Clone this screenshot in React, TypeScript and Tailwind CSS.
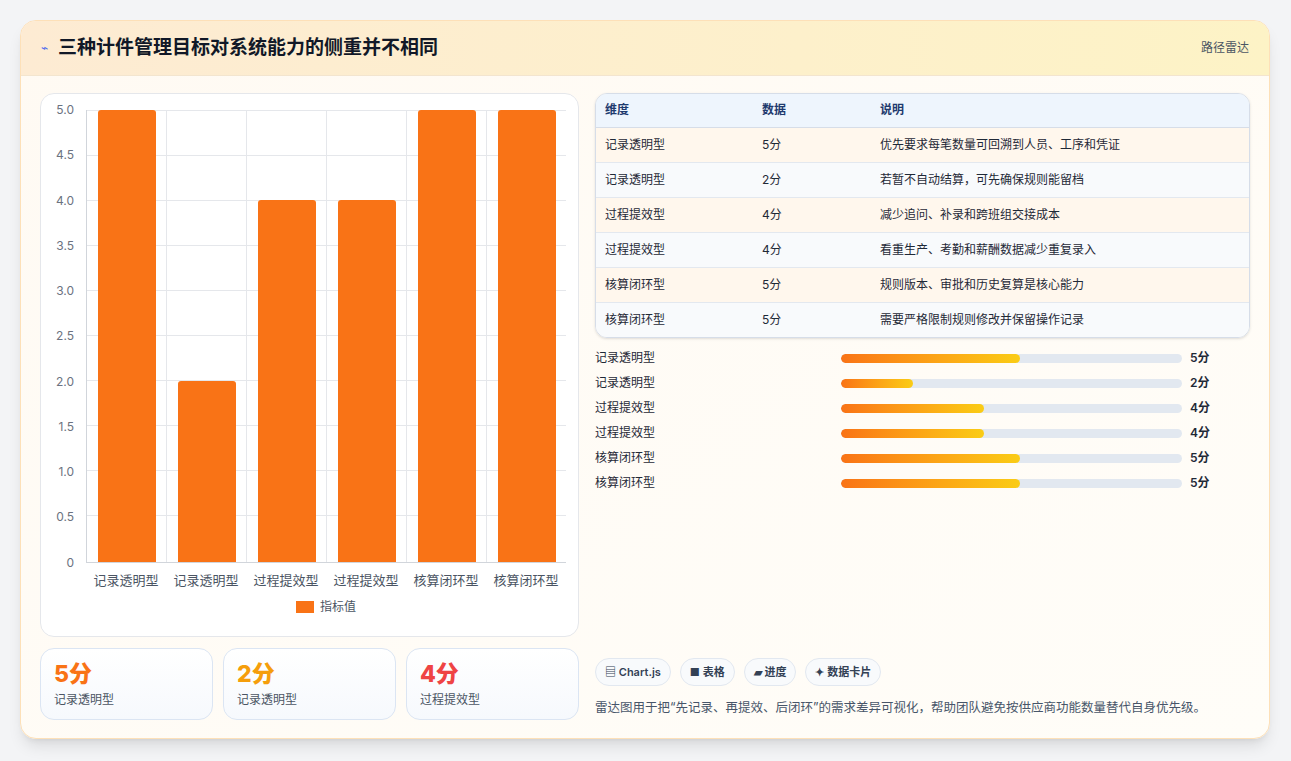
const rows = [
  { name: '记录透明型', v: 5, note: '优先要求每笔数量可回溯到人员、工序和凭证' },
  { name: '记录透明型', v: 2, note: '若暂不自动结算，可先确保规则能留档' },
  { name: '过程提效型', v: 4, note: '减少追问、补录和跨班组交接成本' },
  { name: '过程提效型', v: 4, note: '看重生产、考勤和薪酬数据减少重复录入' },
  { name: '核算闭环型', v: 5, note: '规则版本、审批和历史复算是核心能力' },
  { name: '核算闭环型', v: 5, note: '需要严格限制规则修改并保留操作记录' },
]

const ticks = ['5.0', '4.5', '4.0', '3.5', '3.0', '2.5', '2.0', '1.5', '1.0', '0.5', '0']

function Chart() {
  return (
    <div className="flex flex-col h-full pt-[16px] pb-[20px] pl-[8px] pr-[12px]">
      <div className="flex flex-1">
        <div className="w-[37px] flex flex-col justify-between text-[12px] text-[#6b7280] text-right pr-[12px] -mt-[7px] -mb-[7px]">
          {ticks.map((t) => (
            <span key={t} className="leading-[14px]">{t}</span>
          ))}
        </div>
        <div className="relative flex-1 border-l border-b border-[#d1d5db]">
          <div className="absolute inset-0 flex flex-col justify-between">
            {ticks.map((t, i) => (
              <div key={t} className={`h-px ${i === ticks.length - 1 ? 'bg-transparent' : 'bg-[#e5e7eb]'}`} />
            ))}
          </div>
          <div className="absolute inset-0 flex">
            {rows.map((r, i) => (
              <div key={i} className={`flex-1 flex items-end justify-center ${i < 5 ? 'border-r border-[#e5e7eb]' : ''}`}>
                <div className="w-[58px] bg-[#f97316] rounded-t-[3px]" style={{ height: `${(r.v / 5) * 100}%` }} />
              </div>
            ))}
          </div>
        </div>
      </div>
      <div className="flex ml-[37px] mt-[8px]">
        {rows.map((r, i) => (
          <div key={i} className="flex-1 text-center text-[13px] text-[#4b5563]">{r.name}</div>
        ))}
      </div>
      <div className="flex items-center justify-center gap-[6px] mt-[8px] ml-[37px] text-[12px] text-[#4b5563]">
        <span className="w-[18px] h-[12px] bg-[#f97316]" />
        指标值
      </div>
    </div>
  )
}

export default function App() {
  return (
    <div className="w-[1291px] h-[761px] bg-[#f3f4f6] pt-[20px] px-[20px]" style={{ fontFamily: 'Inter, "Noto Sans CJK SC", sans-serif' }}>
      <div className="w-[1250px] h-[719px] rounded-[16px] border border-[#fde0b8] bg-gradient-to-br from-[#fffaf3] to-[#fffdf8] shadow-lg flex flex-col overflow-hidden">
        <div className="h-[55px] flex items-center justify-between px-[20px] bg-gradient-to-r from-[#fdebd3] to-[#fdf3c6] border-b border-[#f3e5cf]">
          <div className="flex items-center gap-[10px]">
            <span className="text-[#4f6bed] text-[12px]">⌁</span>
            <h1 className="text-[19px] font-bold text-[#111827]">三种计件管理目标对系统能力的侧重并不相同</h1>
          </div>
          <span className="text-[12px] text-[#4b5563]">路径雷达</span>
        </div>
        <div className="flex flex-1 gap-[16px] px-[19px] pt-[17px] pb-[18px]">
          <div className="w-[539px] flex flex-col gap-[11px]">
            <div className="h-[544px] bg-white rounded-[14px] border border-[#e5e7eb]">
              <Chart />
            </div>
            <div className="flex gap-[10px] flex-1">
              {[
                { v: '5分', c: 'text-[#f97316]' },
                { v: '2分', c: 'text-[#f59e0b]' },
                { v: '4分', c: 'text-[#ef4444]' },
              ].map((s, i) => (
                <div key={i} className="flex-1 rounded-[14px] border border-[#dbe5f3] bg-gradient-to-b from-white to-[#f6f9fd] px-[13px] pt-[10px]">
                  <div className={`text-[23px] font-extrabold leading-[30px] ${s.c}`}>{s.v}</div>
                  <div className="text-[12px] text-[#4b5563] mt-[2px]">{rows[i].name}</div>
                </div>
              ))}
            </div>
          </div>
          <div className="flex-1 flex flex-col">
            <div className="rounded-[12px] border border-[#d6dde8] overflow-hidden shadow-sm">
              <table className="w-full text-[12px]">
                <thead>
                  <tr className="bg-[#eef5fd] text-[#1e3a6e] h-[33px] border-b border-[#d6dde8]">
                    <th className="text-left font-semibold pl-[9px] w-[166px]">维度</th>
                    <th className="text-left font-semibold w-[118px]">数据</th>
                    <th className="text-left font-semibold">说明</th>
                  </tr>
                </thead>
                <tbody>
                  {rows.map((r, i) => (
                    <tr key={i} className={`h-[35px] text-[#1f2937] ${i < 5 ? 'border-b border-[#e3e8ef]' : ''} ${i % 2 === 0 ? 'bg-[#fff7ed]' : 'bg-[#f8fafc]'}`}>
                      <td className="pl-[9px]">{r.name}</td>
                      <td>{r.v}分</td>
                      <td>{r.note}</td>
                    </tr>
                  ))}
                </tbody>
              </table>
            </div>
            <div className="flex flex-col gap-[9px] mt-[12px]">
              {rows.map((r, i) => (
                <div key={i} className="flex items-center h-[16px] text-[12px] text-[#1f2937]">
                  <span className="w-[246px]">{r.name}</span>
                  <div className="w-[341px] h-[9px] rounded-full bg-[#e2e8f0] overflow-hidden">
                    <div className="h-full rounded-full bg-gradient-to-r from-[#f97316] to-[#facc15]" style={{ width: `${r.v * 10.5}%` }} />
                  </div>
                  <span className="ml-[8px] font-semibold">{r.v}分</span>
                </div>
              ))}
            </div>
            <div className="mt-auto">
              <div className="flex gap-[9px]">
                {['▤ Chart.js', '■ 表格', '▰ 进度', '✦ 数据卡片'].map((t) => (
                  <span key={t} className="h-[28px] px-[9px] flex items-center rounded-full border border-[#e2e8f0] bg-[#f8fafc] text-[11px] font-semibold text-[#334155]">{t}</span>
                ))}
              </div>
              <p className="mt-[13px] text-[12.5px] text-[#475569] mb-[2px]">雷达图用于把“先记录、再提效、后闭环”的需求差异可视化，帮助团队避免按供应商功能数量替代自身优先级。</p>
            </div>
          </div>
        </div>
      </div>
    </div>
  )
}
